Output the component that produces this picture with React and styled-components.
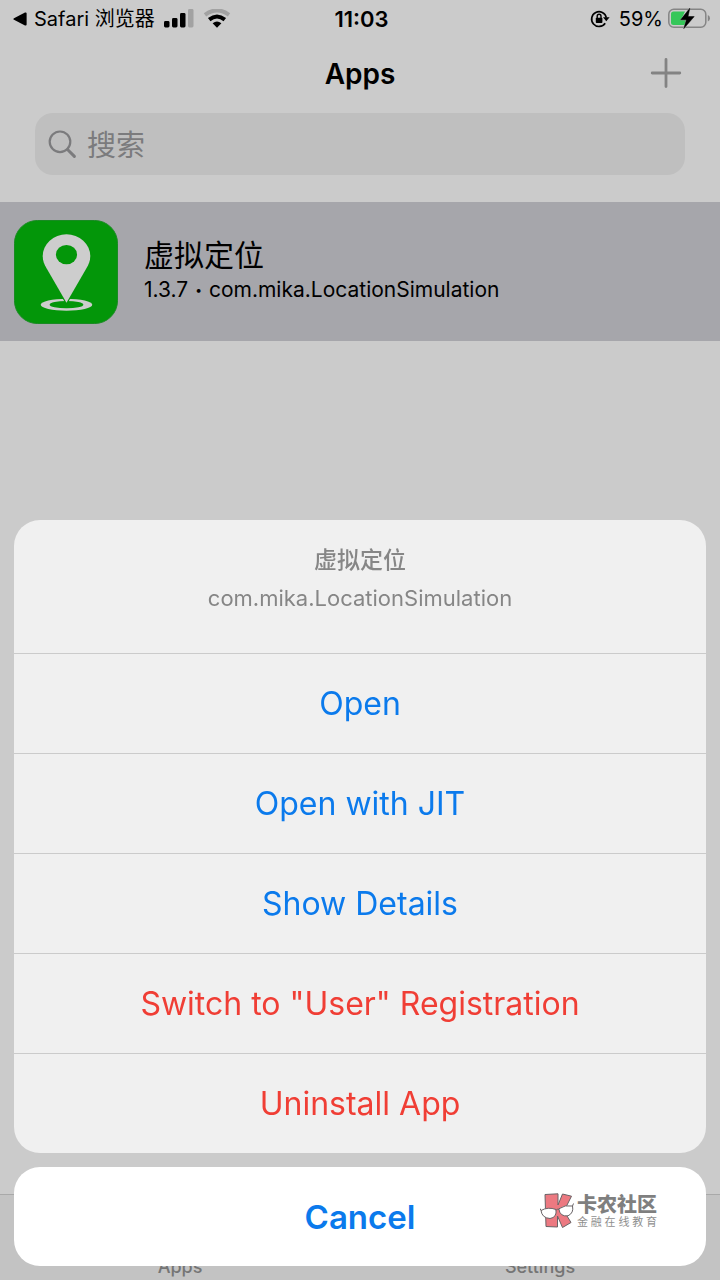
import React from 'react';
import styled, { createGlobalStyle } from 'styled-components';

const GlobalStyle = createGlobalStyle`
  * {
    box-sizing: border-box;
  }

  body {
    margin: 0;
    background: #cbcbcb;
    color: #000;
    font-family: Inter, "Noto Sans CJK SC", sans-serif;
  }

  button, input {
    font-family: inherit;
  }
`

// Screen
const Screen = styled.div`
  min-height: 100vh;
  display: flex;
  flex-direction: column;
`

const StatusBar = styled.div`
  display: grid;
  grid-template-columns: 1fr auto 1fr;
  align-items: center;
  height: 37px;
  padding: 0 10px 0 13px;
  font-size: 20px;
  line-height: 24px;
`

const StatusGroup = styled.div`
  display: flex;
  align-items: center;
  justify-content: ${props => props.$end ? 'flex-end' : 'flex-start'};
  gap: 9px;
`

const BackLink = styled.a`
  display: flex;
  align-items: center;
  gap: 7px;
  color: #000;
  text-decoration: none;
  white-space: nowrap;
`

const Battery = styled.span`
  display: flex;
  align-items: center;
  gap: 5px;
`

const Time = styled.time`
  font-size: 22px;
  font-weight: 600;
`

const NavBar = styled.header`
  display: grid;
  grid-template-columns: 1fr auto 1fr;
  align-items: center;
  height: 74px;
  padding: 0 38px;
`

const Title = styled.h1`
  grid-column: 2;
  margin: 0;
  font-size: 28px;
  line-height: 34px;
  font-weight: 600;
`

const AddButton = styled.button`
  display: flex;
  justify-self: end;
  padding: 0;
  border: 0;
  background: none;
`

const SearchBox = styled.label`
  display: flex;
  align-items: center;
  gap: 10px;
  height: 62px;
  margin: 2px 35px 27px;
  padding: 0 13px;
  border-radius: 18px;
  background: #bfbfbf;
`

const SearchInput = styled.input`
  flex: 1;
  min-width: 0;
  padding: 4px 0 0;
  border: 0;
  outline: 0;
  background: none;
  font-size: 29px;
  line-height: 40px;

  &::placeholder {
    color: #7b7b7d;
    opacity: 1;
  }
`

const AppList = styled.ul`
  flex: 1;
  margin: 0;
  padding: 0;
  list-style: none;
`

const AppRow = styled.li`
  display: flex;
  align-items: center;
  gap: 26px;
  height: 139px;
  padding: 0 14px;
  background: #a6a6ab;
`

const AppInfo = styled.div`
  padding-bottom: 4px;
`

const AppName = styled.h2`
  margin: 0;
  font-size: 30px;
  line-height: 40px;
  font-weight: 400;
`

const AppMeta = styled.p`
  display: flex;
  gap: 7px;
  margin: 0;
  font-size: 21px;
  line-height: 30px;
`

const Bullet = styled.span`
  font-size: 12px;
`

const TabBar = styled.nav`
  display: flex;
  align-items: flex-end;
  height: 86px;
  padding-bottom: 1px;
  border-top: 1px solid #a9a9a9;
  background: #c3c3c3;
`

const Tab = styled.a`
  flex: 1;
  color: #757575;
  font-size: 18px;
  line-height: 24px;
  font-weight: 500;
  text-align: center;
  text-decoration: none;
`

// Action sheet
const Sheet = styled.div`
  position: fixed;
  left: 14px;
  right: 14px;
  bottom: 14px;
  display: flex;
  flex-direction: column;
  gap: 14px;
`

const SheetPanel = styled.div`
  border-radius: 26px;
  overflow: hidden;
  background: #f0f0f0;
`

const SheetHeader = styled.div`
  height: 133px;
  padding-top: 21px;
  color: #868686;
  font-size: 22px;
  line-height: 38px;
  text-align: center;
`

const SheetTitle = styled.h3`
  margin: 0;
  font-size: 23px;
  line-height: 38px;
  font-weight: 500;
`

const SheetText = styled.p`
  margin: 0;
`

const SheetButton = styled.button`
  display: block;
  width: 100%;
  height: 100px;
  padding: 0;
  border: 0;
  border-top: 1px solid #cbcbcb;
  background: none;
  color: ${props => props.$danger ? '#f03e35' : '#0b7aec'};
  font-size: 32px;
  line-height: 42px;
`

const CancelButton = styled(SheetButton)`
  height: 99px;
  border: 0;
  border-radius: 26px;
  background: #fff;
  font-size: 33px;
  font-weight: 600;
`

const CancelArea = styled.div`
  position: relative;
`

const Watermark = styled.div`
  position: absolute;
  top: 26px;
  right: 49px;
  display: flex;
  align-items: center;
  gap: 3px;
  color: #7f7f7f;
  pointer-events: none;
`

const WatermarkName = styled.div`
  font-size: 20px;
  line-height: 22px;
  font-weight: 900;
`

const WatermarkTag = styled.div`
  display: flex;
  justify-content: space-between;
  color: #8f8f8f;
  font-size: 11px;
  line-height: 12px;
`

const actions = [
  { label: 'Open' },
  { label: 'Open with JIT' },
  { label: 'Show Details' },
  { label: 'Switch to "User" Registration', danger: true },
  { label: 'Uninstall App', danger: true },
];

const BackIcon = () => (
  <svg width="14" height="14" viewBox="0 0 14 14" aria-hidden="true">
    <path d="M1 6.2 12 .6Q13.6 0 13.6 1.6V12.4Q13.6 14 12 13.4L1 7.8Q-.3 7 1 6.2Z" />
  </svg>
);

const SignalIcon = () => (
  <svg width="30" height="20" viewBox="0 0 30 20" aria-hidden="true">
    <rect x="0" y="12" width="5.5" height="6.5" rx="1.4" />
    <rect x="8" y="9" width="5.5" height="9.5" rx="1.4" />
    <rect x="16" y="4" width="5.5" height="14.5" rx="1.4" />
    <rect x="24" y="0" width="5.5" height="18.5" rx="1.4" fill="#a2a2a2" />
  </svg>
);

const WifiIcon = () => (
  <svg width="28" height="20" viewBox="0 0 28 20" fill="none" aria-hidden="true">
    <path d="M2 5.8Q14-3 26 5.8" stroke="#a2a2a2" strokeWidth="4" />
    <path d="M6.2 10.6Q14 4.4 21.8 10.6" stroke="#000" strokeWidth="4" />
    <path d="M9.6 14.3Q14 10.9 18.4 14.3L14 18.7Z" fill="#000" />
  </svg>
);

const LockIcon = () => (
  <svg width="20" height="20" viewBox="0 0 20 20" fill="none" aria-hidden="true">
    <path d="M15.2 14.2A7.4 7.4 0 1 1 16.3 8.6" stroke="#000" strokeWidth="1.7" />
    <path d="M13 8.2H19.6L16.3 12.2Z" fill="#000" />
    <rect x="5.8" y="8.8" width="6.6" height="5.2" rx=".8" fill="#000" />
    <path d="M7.2 9V7.2A1.9 1.9 0 0 1 11 7.2V9" stroke="#000" strokeWidth="1.4" />
  </svg>
);

const BatteryIcon = () => (
  <svg width="42" height="22" viewBox="0 0 42 22" aria-hidden="true">
    <rect x=".8" y="1.3" width="37" height="18" rx="5" fill="none" stroke="#858585" strokeWidth="1.5" />
    <path d="M5.5 3.6H17L13 12H18L17 17H5.5Q3 17 3 14.5V6.1Q3 3.6 5.5 3.6Z" fill="#35c759" />
    <path d="M39.8 7Q42 8 42 10.2T39.8 13.4Z" fill="#858585" />
    <path d="M21.8.2 12.6 11.8H18.4L15.8 20.6 26.2 8.6H20Z" stroke="#cbcbcb" strokeWidth="1" />
    <path d="M21.8.2 12.6 11.8H18.4L15.8 20.6 26.2 8.6H20Z" stroke="#000" strokeWidth=".5" />
  </svg>
);

const PlusIcon = () => (
  <svg width="32" height="32" viewBox="0 0 32 32" aria-hidden="true">
    <path d="M16 1.4V28.6M2.2 15H29.8" stroke="#838383" strokeWidth="2.8" strokeLinecap="round" />
  </svg>
);

const SearchIcon = () => (
  <svg width="29" height="29" viewBox="0 0 29 29" fill="none" stroke="#7b7b7d" aria-hidden="true">
    <circle cx="12" cy="11.8" r="10.3" strokeWidth="2.2" />
    <path d="M19.5 19.5 26.4 26.4" strokeWidth="3" strokeLinecap="round" />
  </svg>
);

const AppIcon = () => (
  <svg width="104" height="104" viewBox="0 0 105 105" aria-hidden="true">
    <rect x=".5" y=".5" width="104" height="104" rx="23" fill="#039609" stroke="#188a22" />
    <ellipse cx="53" cy="85.5" rx="26" ry="6" fill="#cdcdcd" />
    <ellipse cx="53" cy="85.5" rx="17" ry="3.7" fill="#039609" />
    <path
      d="M53 83.5 33 49C30.5 44.5 29 41 29 36.5A24 22 0 0 1 77 36.5C77 41 75.5 44.5 73 49Z"
      fill="#cdcdcd"
      stroke="#039609"
      strokeWidth="2.4"
      paintOrder="stroke"
    />
    <ellipse cx="53" cy="35" rx="10.7" ry="9.7" fill="#039609" />
  </svg>
);

const WatermarkLogo = () => (
  <svg width="34" height="36" viewBox="0 0 34 36" stroke="#696366" strokeWidth="1" aria-hidden="true">
    <path d="M5 1.5 18 .8 18 12 22.5 1 31.5 3.2 24 18 31 29.5 22.5 34.5 17.5 23V34L6 33.5Z" fill="#ec7981" />
    <path d="M1 17.5Q8 13.5 16 16.5 17 24.5 10 25.5 2 25 1 17.5Z" fill="#fff" />
    <path d="M18.8 15.8Q25 11.5 32.5 13 34 20 28 22.8 20 24 18.8 15.8Z" fill="#fff" />
    <path d="M16 17.5Q17.4 15 19 16.5M1 17.5 0 15.5M32.5 13 33.5 10.5" fill="none" />
  </svg>
);

const App = () => {
  return (
    <>
      <GlobalStyle />
      <Screen>
        <StatusBar>
          <StatusGroup>
            <BackLink href="#safari">
              <BackIcon />
              Safari 浏览器
            </BackLink>
            <SignalIcon />
            <WifiIcon />
          </StatusGroup>
          <Time>11:03</Time>
          <StatusGroup $end>
            <LockIcon />
            <Battery>
              59%
              <BatteryIcon />
            </Battery>
          </StatusGroup>
        </StatusBar>
        <NavBar>
          <Title>Apps</Title>
          <AddButton type="button" aria-label="Add">
            <PlusIcon />
          </AddButton>
        </NavBar>
        <SearchBox>
          <SearchIcon />
          <SearchInput type="text" placeholder="搜索" aria-label="搜索" />
        </SearchBox>
        <AppList>
          <AppRow>
            <AppIcon />
            <AppInfo>
              <AppName>虚拟定位</AppName>
              <AppMeta>
                1.3.7
                <Bullet>•</Bullet>
                <span>com.mika.LocationSimulation</span>
              </AppMeta>
            </AppInfo>
          </AppRow>
        </AppList>
        <TabBar>
          <Tab href="#apps">Apps</Tab>
          <Tab href="#settings">Settings</Tab>
        </TabBar>
      </Screen>
      <Sheet role="dialog" aria-label="虚拟定位">
        <SheetPanel>
          <SheetHeader>
            <SheetTitle>虚拟定位</SheetTitle>
            <SheetText>com.mika.LocationSimulation</SheetText>
          </SheetHeader>
          {actions.map(action => (
            <SheetButton key={action.label} type="button" $danger={action.danger}>
              {action.label}
            </SheetButton>
          ))}
        </SheetPanel>
        <CancelArea>
          <CancelButton type="button">Cancel</CancelButton>
          <Watermark>
            <WatermarkLogo />
            <div>
              <WatermarkName>卡农社区</WatermarkName>
              <WatermarkTag>
                {[...'金融在线教育'].map(char => <span key={char}>{char}</span>)}
              </WatermarkTag>
            </div>
          </Watermark>
        </CancelArea>
      </Sheet>
    </>
  );
};

export default App;
